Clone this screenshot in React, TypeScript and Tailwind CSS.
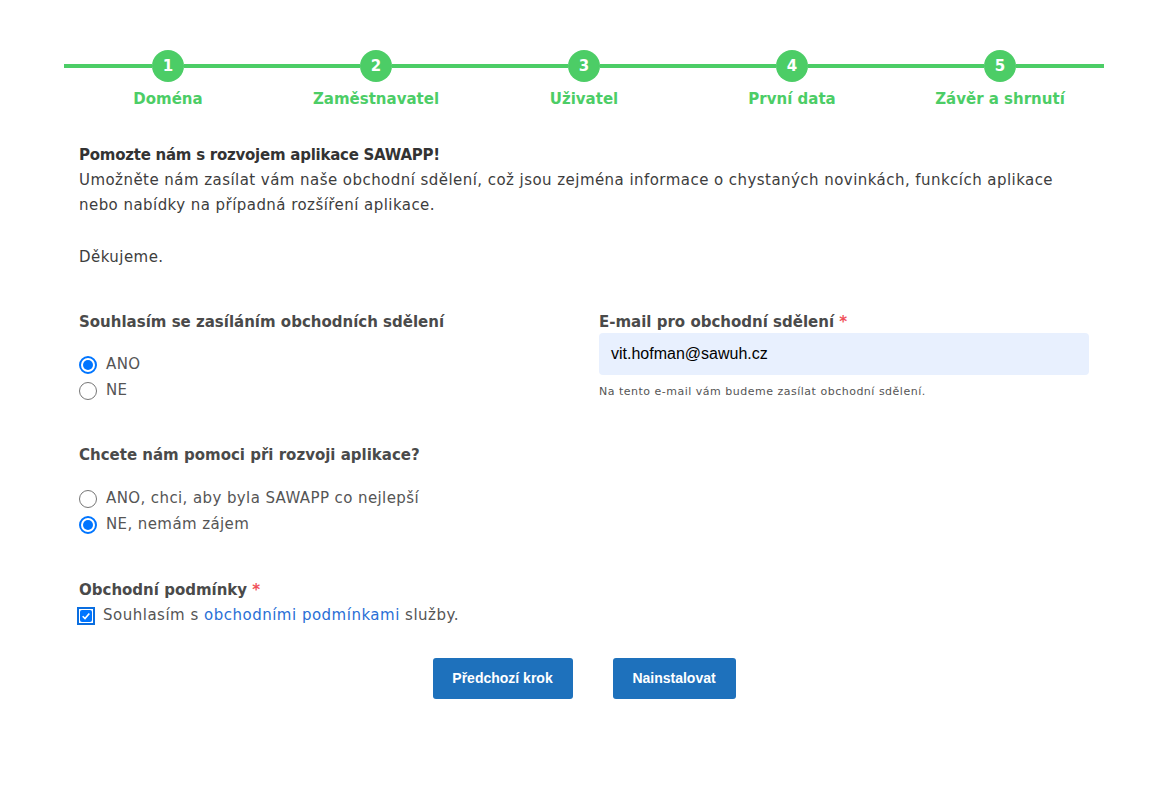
import React from "react";

const steps = ["Doména", "Zaměstnavatel", "Uživatel", "První data", "Závěr a shrnutí"];

function Radio({ checked, label }: { checked: boolean; label: string }) {
  return (
    <label className="flex items-center h-[26px] gap-[9px]">
      {checked ? (
        <span className="w-[18px] h-[18px] rounded-full border-2 border-[#0075ff] flex items-center justify-center">
          <span className="w-[10px] h-[10px] rounded-full bg-[#0075ff]" />
        </span>
      ) : (
        <span className="w-[18px] h-[18px] rounded-full border border-[#767676] bg-white" />
      )}
      <span className="text-[15px] tracking-[0.4px] text-[#555]">{label}</span>
    </label>
  );
}

export default function App() {
  return (
    <div
      className="w-[1165px] min-h-[794px] bg-white text-[#333]"
      style={{ fontFamily: "'DejaVu Sans', sans-serif" }}
    >
      <div className="mx-[64px] w-[1040px] pt-[50px]">
        {/* progress stepper */}
        <div className="grid grid-cols-5">
          {steps.map((s, i) => (
            <div key={s} className="flex flex-col items-center">
              <div className="flex items-center w-full">
                <div className="flex-1 h-[4px] bg-[#4ccd66]" />
                <div className="w-[32px] h-[32px] rounded-full bg-[#4ccd66] text-white font-bold text-[15px] flex items-center justify-center">
                  {i + 1}
                </div>
                <div className="flex-1 h-[4px] bg-[#4ccd66]" />
              </div>
              <div className="mt-[6px] text-[15px] font-bold text-[#4ccd66]">{s}</div>
            </div>
          ))}
        </div>

        <div className="px-[15px] pt-[32px]">
          <p className="text-[15px] leading-[25px] tracking-[0.45px] text-[#3d3d3d]">
            <span className="font-bold tracking-[-0.25px] text-[#333]">Pomozte nám s rozvojem aplikace SAWAPP!</span>
            <br />
            Umožněte nám zasílat vám naše obchodní sdělení, což jsou zejména informace o chystaných novinkách, funkcích
            aplikace nebo nabídky na případná rozšíření aplikace.
          </p>
          <p className="text-[15px] leading-[25px] tracking-[0.45px] text-[#3d3d3d] mt-[27px]">Děkujeme.</p>

          <div className="grid grid-cols-2 gap-[30px] mt-[40px]">
            <div>
              <div className="text-[15px] font-bold text-[#4a4a4a] leading-[25px]">
                Souhlasím se zasíláním obchodních sdělení
              </div>
              <div className="mt-[17px] flex flex-col">
                <Radio checked label="ANO" />
                <Radio checked={false} label="NE" />
              </div>
            </div>
            <div>
              <div className="text-[15px] font-bold text-[#4a4a4a] leading-[25px]">
                E-mail pro obchodní sdělení <span className="text-[#f0505a]">*</span>
              </div>
              <div
                className="-mt-[2px] h-[42px] rounded-[4px] bg-[#e8f0fe] flex items-center px-[12px] text-[16px] text-black"
                style={{ fontFamily: "'Liberation Sans', Arial, sans-serif" }}
              >
                vit.hofman@sawuh.cz
              </div>
              <div className="mt-[9px] text-[11px] tracking-[0.5px] text-[#555]">
                Na tento e-mail vám budeme zasílat obchodní sdělení.
              </div>
            </div>
          </div>

          <div className="mt-[39px]">
            <div className="text-[15px] font-bold text-[#4a4a4a] leading-[25px]">
              Chcete nám pomoci při rozvoji aplikace?
            </div>
            <div className="mt-[18px] flex flex-col">
              <Radio checked={false} label="ANO, chci, aby byla SAWAPP co nejlepší" />
              <Radio checked label="NE, nemám zájem" />
            </div>
          </div>

          <div className="mt-[40px]">
            <div className="text-[15px] font-bold text-[#4a4a4a] leading-[25px]">
              Obchodní podmínky <span className="text-[#f0505a]">*</span>
            </div>
            <label className="flex items-center gap-[8px] h-[26px] -ml-[2px]">
              <span className="w-[18px] h-[18px] border-2 border-[#0a6ee0] p-[1px] flex items-center justify-center">
                <span className="w-full h-full bg-[#0075ff] rounded-[2px] flex items-center justify-center">
                  <svg viewBox="0 0 12 12" className="w-[10px] h-[10px]">
                    <path d="M2 6.3 L4.8 9 L10 3" fill="none" stroke="white" strokeWidth="2" />
                  </svg>
                </span>
              </span>
              <span className="text-[15px] tracking-[0.5px] text-[#555]">
                Souhlasím s <span className="text-[#2a6fd6]">obchodními podmínkami</span> služby.
              </span>
            </label>
          </div>

          <div
            className="flex justify-center gap-[40px] mt-[29px]"
            style={{ fontFamily: "'Liberation Sans', Arial, sans-serif" }}
          >
            <button className="w-[140px] h-[41px] rounded-[3px] bg-[#1e71bc] text-white font-bold text-[14px]">
              Předchozí krok
            </button>
            <button className="w-[123px] h-[41px] rounded-[3px] bg-[#1e71bc] text-white font-bold text-[14px]">
              Nainstalovat
            </button>
          </div>
        </div>
      </div>
    </div>
  );
}
